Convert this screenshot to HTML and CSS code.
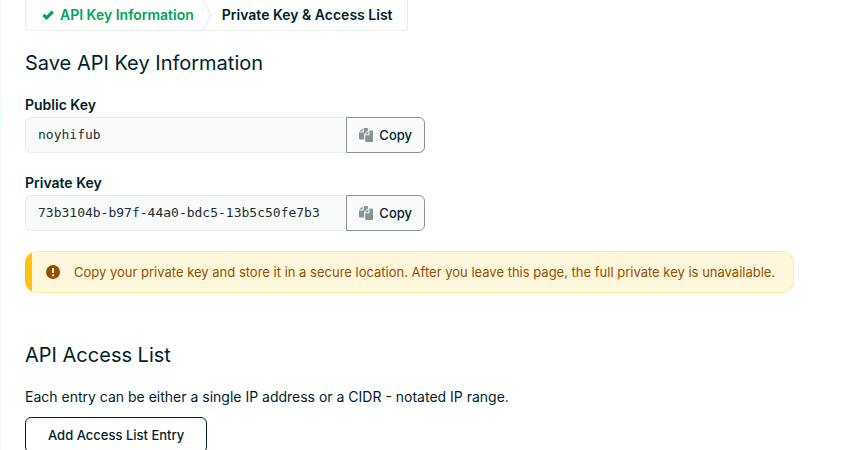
FILE: index.html
```html
<!DOCTYPE html>
<html lang="en">
<head>
  <meta charset="UTF-8" />
  <meta name="viewport" content="width=device-width, initial-scale=1.0"/>
  <title>Save API Key Information</title>
  <link rel="stylesheet" href="styles.css">
</head>
<body>

  <div class="side-edge"><span class="side-active"></span></div>

  <main>
    <ol class="steps">
      <li class="step done">
        <svg class="check" viewBox="0 0 12 10" aria-hidden="true"><path d="M1.4 4.8L4.6 7.8L10.8 1.6" fill="none" stroke="currentColor" stroke-width="3.2"/></svg>
        API Key Information
      </li>
      <li class="step-arrow" aria-hidden="true">
        <svg viewBox="0 0 10 32"><path d="M1 0L9 16L1 32" fill="none" stroke="currentColor"/></svg>
      </li>
      <li class="step">Private Key &amp; Access List</li>
    </ol>

    <h2>Save API Key Information</h2>

    <div class="field">
      <label for="public-key">Public Key</label>
      <div class="key-box">
        <input type="text" id="public-key" value="noyhifub" readonly>
        <button class="copy-btn" onclick="copyKey('public-key')">
          <svg viewBox="0 0 14 14" aria-hidden="true"><path d="M3.6 .4V3.4H.2ZM4.8 0H7.8Q8.8 0 8.8 1V2.6L5.2 6V11.4H1Q0 11.4 0 10.4V4.5H4.8ZM9.4 3V6.2H6.2ZM10.5 2.6H13Q14 2.6 14 3.6V13Q14 14 13 14H7.2Q6.2 14 6.2 13V7.3H10.5ZM6 0H8Q9 0 9 1V2H6Z"/></svg>
          Copy
        </button>
      </div>
    </div>

    <div class="field">
      <label for="private-key">Private Key</label>
      <div class="key-box">
        <input type="text" id="private-key" value="73b3104b-b97f-44a0-bdc5-13b5c50fe7b3" readonly>
        <button class="copy-btn" onclick="copyKey('private-key')">
          <svg viewBox="0 0 14 14" aria-hidden="true"><path d="M3.6 .4V3.4H.2ZM4.8 0H7.8Q8.8 0 8.8 1V2.6L5.2 6V11.4H1Q0 11.4 0 10.4V4.5H4.8ZM9.4 3V6.2H6.2ZM10.5 2.6H13Q14 2.6 14 3.6V13Q14 14 13 14H7.2Q6.2 14 6.2 13V7.3H10.5ZM6 0H8Q9 0 9 1V2H6Z"/></svg>
          Copy
        </button>
      </div>
    </div>

    <div class="warning">
      <svg viewBox="0 0 14 14" aria-hidden="true"><circle cx="7" cy="7" r="7" fill="#944f01"/><path d="M6 3H8V8H6ZM6 9.4H8V11.2H6Z" fill="#fef7db"/></svg>
      <p>Copy your private key and store it in a secure location. After you leave this page, the full private key is unavailable.</p>
    </div>

    <section class="access-list">
      <h2>API Access List</h2>
      <p>Each entry can be either a single IP address or a CIDR - notated IP range.</p>
      <button class="add-btn">Add Access List Entry</button>
    </section>
  </main>

  <script>
    function copyKey(id) {
      const input = document.getElementById(id);
      input.select();
      navigator.clipboard.writeText(input.value);
    }
  </script>
</body>
</html>
```

FILE: styles.css
```css
* {
  box-sizing: border-box;
}

body {
  font-family: Inter, sans-serif;
  font-size: 13px;
  line-height: 20px;
  margin: 0;
  height: 100vh;
  overflow: hidden;
  display: flex;
  background: #fff;
  color: #001e2b;
}

.side-edge {
  width: 1px;
  background: #f5f6f7;
  padding-top: 100px;
}

.side-active {
  display: block;
  height: 32px;
  background: #e3fcf7;
}

main {
  flex: 1;
  padding: 0 56px 0 24px;
}

h2 {
  font-size: 20px;
  font-weight: 400;
  line-height: 24px;
  margin: 0;
}

.steps {
  display: flex;
  width: fit-content;
  list-style: none;
  margin: 0 0 20px;
  padding: 0;
  height: 31px;
  border: 1px solid #e8edeb;
  border-top: none;
  border-radius: 0 0 4px 4px;
  font-size: 14px;
  font-weight: 600;
}

.step {
  display: flex;
  align-items: center;
  padding: 0 14px 0 10px;
}

.step.done {
  color: #00a35c;
  padding: 0 8px 0 16px;
}

.check {
  width: 12px;
  height: 10px;
  margin-right: 6px;
}

.step-arrow {
  color: #dfe3e2;
  width: 10px;
}

.step-arrow svg {
  display: block;
  height: 30px;
  width: 10px;
}

.field {
  margin-top: 20px;
  max-width: 400px;
}

.field label {
  display: block;
  font-size: 14px;
  font-weight: 600;
  margin-bottom: 2px;
}

.key-box {
  display: flex;
  height: 36px;
}

.key-box input {
  flex: 1;
  min-width: 0;
  padding: 0 12px 2px;
  border: 1px solid #e8edeb;
  border-right: none;
  border-radius: 6px 0 0 6px;
  background: #f9fbfa;
  color: #1c2d38;
  font-family: "DejaVu Sans Mono", monospace;
  font-size: 13px;
}

.copy-btn {
  display: flex;
  align-items: center;
  gap: 6px;
  padding: 0 12px;
  border: 1px solid #889397;
  border-radius: 0 6px 6px 0;
  background: #f9fbfa;
  color: #001e2b;
  font-family: inherit;
  font-size: 13px;
  font-weight: 500;
  cursor: pointer;
}

.copy-btn svg {
  width: 14px;
  height: 14px;
  fill: #889397;
}

.warning {
  display: flex;
  align-items: center;
  gap: 14px;
  margin-top: 20px;
  padding: 10px 12px 10px 21px;
  border: 1px solid #ffec9e;
  border-left: none;
  border-radius: 12px;
  background: linear-gradient(to right, #ffc010 7px, #fef7db 7px);
  color: #944f01;
}

.warning svg {
  flex: none;
  width: 14px;
  height: 14px;
}

.warning p {
  margin: 0;
}

.access-list {
  margin-top: 50px;
}

.access-list p {
  font-size: 14px;
  margin: 20px 0 10px;
}

.add-btn {
  height: 36px;
  padding: 0 22px;
  border: 1px solid #001e2b;
  border-radius: 6px;
  background: #fff;
  color: #001e2b;
  font-family: inherit;
  font-size: 13px;
  font-weight: 500;
  cursor: pointer;
}
```
